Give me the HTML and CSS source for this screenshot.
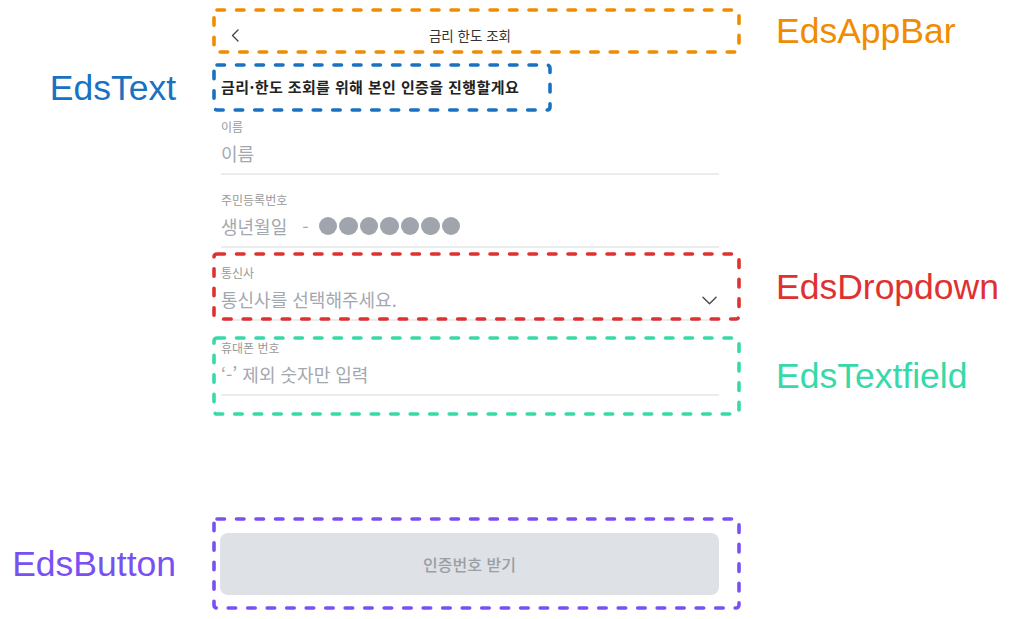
FILE: index.html
```html
<!DOCTYPE html>
<html lang="ko">
<head>
<meta charset="utf-8">
<title>Eds components</title>
<link rel="stylesheet" href="styles.css">
</head>
<body>
<div class="page">
  <div class="row row-appbar">
    <div></div>
    <div class="box box-appbar">
      <svg class="dash dash-orange"><rect x="0" y="0" width="100%" height="100%" rx="3"/></svg>
      <div class="appbar">
        <svg class="back" viewBox="0 0 8 13"><path d="M7 1 L1.5 6.5 L7 12"/></svg>
        <span class="appbar-title">금리 한도 조회</span>
        <span></span>
      </div>
    </div>
    <div class="tag tag-right c-orange">EdsAppBar</div>
  </div>

  <div class="row row-text">
    <div class="tag tag-left c-blue">EdsText</div>
    <div class="cell">
      <div class="box box-text">
        <svg class="dash dash-blue"><rect x="0" y="0" width="100%" height="100%" rx="3"/></svg>
        <p class="headline">금리·한도 조회를 위해 본인 인증을 진행할게요</p>
      </div>
    </div>
    <div></div>
  </div>

  <div class="row row-name">
    <div></div>
    <div class="plain">
      <div class="field">
        <div class="field-label">이름</div>
        <div class="field-value">이름</div>
      </div>
    </div>
    <div></div>
  </div>

  <div class="row row-id">
    <div></div>
    <div class="plain">
      <div class="field">
        <div class="field-label">주민등록번호</div>
        <div class="field-value">생년월일<span class="dash-sep">-</span><span class="dots"><i></i><i></i><i></i><i></i><i></i><i></i><i></i></span></div>
      </div>
    </div>
    <div></div>
  </div>

  <div class="row row-dropdown">
    <div></div>
    <div class="box box-dropdown">
      <svg class="dash dash-red"><rect x="0" y="0" width="100%" height="100%" rx="3"/></svg>
      <div class="field">
        <div class="field-label">통신사</div>
        <div class="field-value select">
          <span>통신사를 선택해주세요.</span>
          <svg class="chev" viewBox="0 0 16 9"><path d="M1 1 L8 8 L15 1"/></svg>
        </div>
      </div>
    </div>
    <div class="tag tag-right c-red">EdsDropdown</div>
  </div>

  <div class="row row-textfield">
    <div></div>
    <div class="box box-textfield">
      <svg class="dash dash-green"><rect x="0" y="0" width="100%" height="100%" rx="3"/></svg>
      <div class="field">
        <div class="field-label">휴대폰 번호</div>
        <div class="field-value">‘-’ 제외 숫자만 입력</div>
      </div>
    </div>
    <div class="tag tag-right c-green">EdsTextfield</div>
  </div>

  <div class="row row-button">
    <div class="tag tag-left c-violet">EdsButton</div>
    <div class="box box-button">
      <svg class="dash dash-violet"><rect x="0" y="0" width="100%" height="100%" rx="3"/></svg>
      <button class="btn" type="button">인증번호 받기</button>
    </div>
    <div></div>
  </div>
</div>
</body>
</html>
```
FILE: styles.css
```css
html, body {
  margin: 0;
  padding: 0;
  background: #ffffff;
}
body {
  width: 1012px;
  height: 619px;
  overflow: hidden;
  font-family: "Noto Sans CJK KR", "Noto Sans", sans-serif;
  color: #222222;
}
.page {
  padding-top: 8px;
}
.row {
  display: grid;
  grid-template-columns: 212px 529px 1fr;
  align-items: center;
}
.row-text { margin-top: 9px; }
.row-name { margin-top: 7px; }
.row-id { margin-top: 17px; }
.row-dropdown { margin-top: 4px; }
.row-textfield { margin-top: 15px; }
.row-button { margin-top: 101px; }

/* annotation labels */
.tag {
  font-family: "Liberation Sans", Arial, sans-serif;
  font-size: 35.5px;
  line-height: 40px;
  white-space: nowrap;
}
.tag-right { padding-left: 35px; }
.tag-left { justify-self: end; padding-right: 36px; }
.c-orange { color: #f08c00; }
.c-blue { color: #1971c2; }
.c-red { color: #e03131; }
.c-green { color: #38d9a9; }
.c-violet { color: #7950f2; }

/* dashed annotation frames */
.box {
  position: relative;
  box-sizing: border-box;
}
.dash {
  position: absolute;
  top: 2px;
  left: 2px;
  width: calc(100% - 4px);
  height: calc(100% - 4px);
  overflow: visible;
  pointer-events: none;
}
.dash rect {
  fill: none;
  stroke-width: 3.6;
  stroke-dasharray: 7.5 12;
  stroke-linecap: round;
}
.dash-orange rect { stroke: #f08c00; }
.dash-blue rect { stroke: #1971c2; }
.dash-red rect { stroke: #e03131; }
.dash-green rect { stroke: #38d9a9; }
.dash-violet rect { stroke: #7950f2; }

/* app bar */
.box-appbar {
  height: 46px;
  padding: 17px 22px 9px 9px;
}
.appbar {
  display: grid;
  grid-template-columns: 1fr auto 1fr;
  align-items: center;
  height: 20px;
}
.back {
  width: 8px;
  height: 13px;
  margin-left: 10px;
  fill: none;
  stroke: #444444;
  stroke-width: 1.4;
  stroke-linecap: round;
  stroke-linejoin: round;
}
.appbar-title {
  font-size: 13.5px;
  line-height: 20px;
  color: #333333;
}

/* EdsText */
.box-text {
  width: 340px;
  height: 49px;
  padding: 14px 9px 0 9px;
}
.headline {
  margin: 0;
  font-size: 15px;
  line-height: 20px;
  font-weight: 700;
  color: #222222;
  letter-spacing: 0.4px;
  white-space: nowrap;
}

/* fields */
.plain {
  padding: 0 22px 0 9px;
}
.field-label {
  font-size: 12px;
  line-height: 16px;
  color: #999999;
}
.field-value {
  margin-top: 5px;
  padding-bottom: 7px;
  border-bottom: 2px solid #ebecee;
  font-size: 18px;
  line-height: 26px;
  color: #a3a8af;
  display: flex;
  align-items: center;
}
.dash-sep {
  margin: 0 10px 0 15px;
}
.dots {
  display: inline-flex;
  gap: 2px;
}
.dots i {
  width: 18.5px;
  height: 18.5px;
  border-radius: 50%;
  background: #a0a5ad;
}

/* dropdown */
.box-dropdown {
  height: 69px;
  padding: 13px 22px 0 9px;
}
.select {
  justify-content: space-between;
}
.chev {
  width: 15px;
  height: 9px;
  margin-right: 2px;
  margin-top: 3px;
  fill: none;
  stroke: #4a4a4a;
  stroke-width: 1.5;
  stroke-linecap: round;
  stroke-linejoin: round;
}

/* text field */
.box-textfield {
  height: 80px;
  padding: 4px 22px 20px 9px;
}

/* button */
.box-button {
  height: 93px;
  padding: 16px 22px 15px 8px;
}
.btn {
  display: block;
  width: 100%;
  height: 62px;
  border: none;
  border-radius: 8px;
  background: #dee1e5;
  color: #9a9ea5;
  font-family: "Noto Sans CJK KR", "Noto Sans", sans-serif;
  font-size: 16px;
  font-weight: 500;
}
```
